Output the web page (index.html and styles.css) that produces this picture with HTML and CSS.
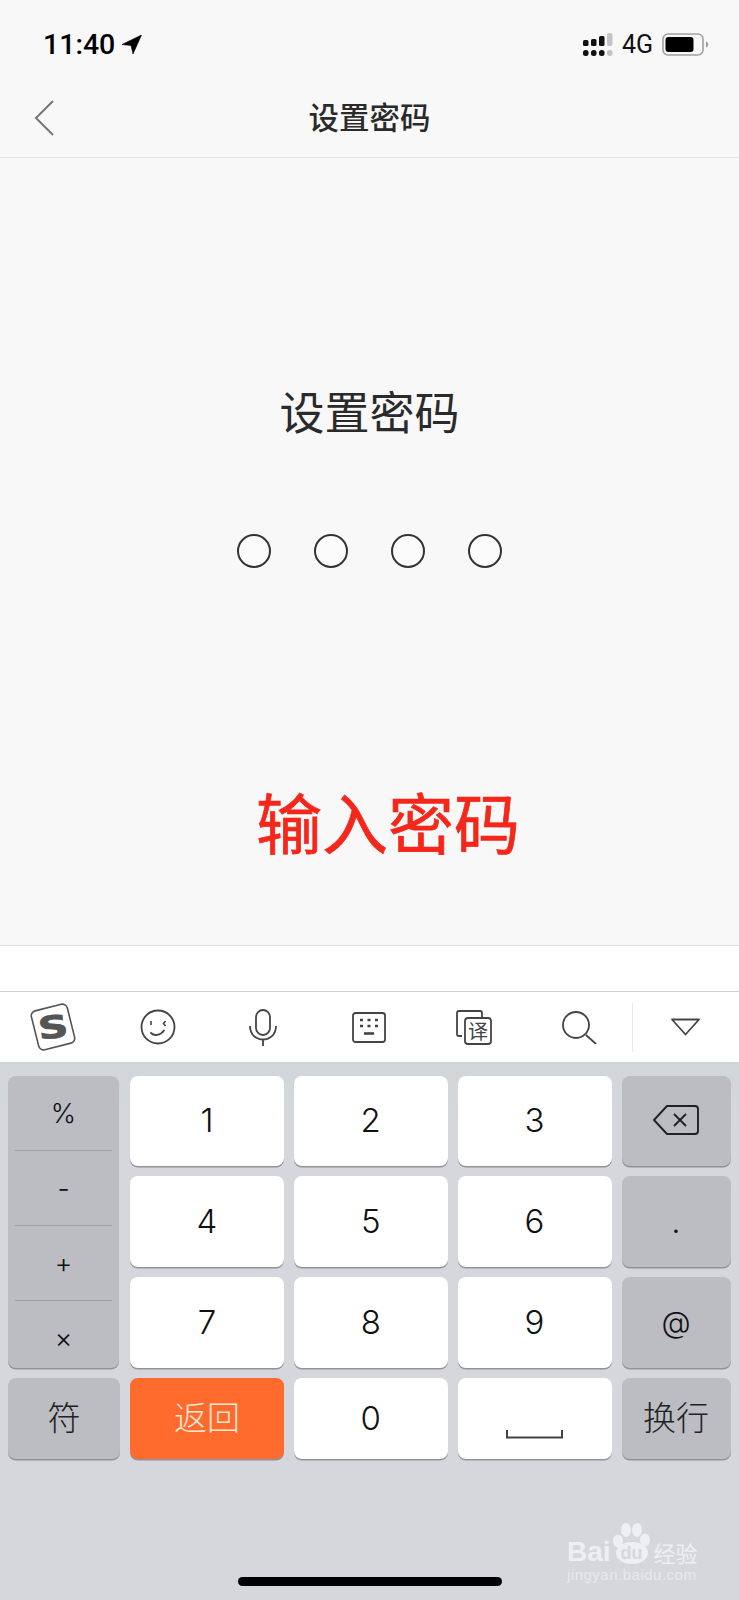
FILE: index.html
```html
<!DOCTYPE html>
<html lang="zh-CN">
<head>
    <meta charset="UTF-8">
    <meta name="viewport" content="width=device-width, initial-scale=1.0">
    <title>设置密码</title>
    <link rel="stylesheet" href="styles.css">
</head>
<body>
    <div class="phone">
        <div class="status">
            <div class="status-left">
                <span class="time">11:40</span>
                <svg class="loc" width="20" height="19" viewBox="0 0 20 19"><path d="M19.5 0 L0 9.5 L9 10.5 L11 19 Z" fill="#000" stroke="#000" stroke-width="0.6" stroke-linejoin="round"/></svg>
            </div>
            <div class="status-right">
                <svg width="30" height="23" viewBox="0 0 30 23">
                    <rect x="0" y="7" width="5.5" height="6" rx="1.5" fill="#111"/>
                    <rect x="8" y="6" width="5.5" height="7" rx="1.5" fill="#111"/>
                    <rect x="16" y="3" width="5.5" height="10" rx="1.5" fill="#111"/>
                    <rect x="24" y="0" width="5.5" height="13" rx="2" fill="#c4c4c4"/>
                    <rect x="0" y="17" width="5.5" height="6" rx="2.5" fill="#111"/>
                    <rect x="8" y="17" width="5.5" height="6" rx="2.5" fill="#111"/>
                    <rect x="16" y="17" width="5.5" height="6" rx="2.5" fill="#111"/>
                    <rect x="24" y="17" width="5.5" height="6" rx="2.5" fill="#c4c4c4"/>
                </svg>
                <span class="net">4G</span>
                <svg width="48" height="23" viewBox="0 0 48 23">
                    <rect x="1" y="1" width="40" height="21" rx="5" fill="none" stroke="#a0a0a0" stroke-width="1.6"/>
                    <rect x="3.5" y="4" width="28" height="15" rx="3" fill="#000"/>
                    <path d="M44 8.5 C47 9.5 47 13.5 44 14.5 Z" fill="#a0a0a0"/>
                </svg>
            </div>
        </div>

        <div class="nav">
            <svg class="back" width="20" height="36" viewBox="0 0 20 36"><path d="M19 1 L2 18 L19 35" fill="none" stroke="#777" stroke-width="2"/></svg>
            <div class="nav-title">设置密码</div>
        </div>

        <div class="setup">
            <div class="setup-title">设置密码</div>
            <div class="dots">
                <span class="dot"></span>
                <span class="dot"></span>
                <span class="dot"></span>
                <span class="dot"></span>
            </div>
            <div class="note">输入密码</div>
        </div>

        <div class="input-row"></div>

        <div class="toolbar">
            <div class="tool">
                <svg width="52" height="52" viewBox="0 0 52 52">
                    <rect x="7.5" y="6" width="37" height="40" rx="5" transform="rotate(-14 26 26)" fill="#fff" stroke="#555" stroke-width="1.6"/>
                    <text class="logo-s" transform="rotate(-6 26 26) translate(26 37) scale(1.35 1)" text-anchor="middle">S</text>
                </svg>
            </div>
            <div class="tool">
                <svg width="36" height="36" viewBox="0 0 36 36" fill="none" stroke="#444" stroke-width="1.8">
                    <circle cx="18" cy="18" r="16.5"/>
                    <path d="M11 12 V16 M25.5 12 L23.5 14.5 L25.5 17" stroke-width="1.6"/>
                    <path d="M11 24 C14 27 20 27 24 21.5" stroke-linecap="round"/>
                </svg>
            </div>
            <div class="tool">
                <svg width="28" height="37" viewBox="0 0 28 37" fill="none" stroke="#444" stroke-width="1.8">
                    <rect x="7" y="1" width="14" height="25" rx="7"/>
                    <path d="M1 17 C1 35 27 35 27 17 M14 30 V37"/>
                </svg>
            </div>
            <div class="tool">
                <svg width="34" height="31" viewBox="0 0 34 31">
                    <rect x="1" y="1" width="32" height="29" rx="2.5" fill="none" stroke="#444" stroke-width="1.8"/>
                    <path d="M8 8 H11 M15.5 8 H18.5 M23 8 H26 M8 14 H11 M15.5 14 H18.5 M23 14 H26" stroke="#444" stroke-width="2.6"/>
                    <path d="M12 21.5 H22" stroke="#444" stroke-width="2.6"/>
                </svg>
            </div>
            <div class="tool">
                <svg width="36" height="35" viewBox="0 0 36 35">
                    <path d="M6 26 H3 Q1 26 1 24 V3 Q1 1 3 1 H24 Q26 1 26 3 V7" fill="none" stroke="#444" stroke-width="1.8"/>
                    <rect x="9" y="8" width="26" height="26" rx="3" fill="#fff" stroke="#444" stroke-width="1.8"/>
                    <text class="logo-yi" x="22" y="28.5" text-anchor="middle">译</text>
                </svg>
            </div>
            <div class="tool">
                <svg width="35" height="33" viewBox="0 0 35 33" fill="none" stroke="#444" stroke-width="1.8">
                    <circle cx="14" cy="14" r="13"/>
                    <path d="M24 24 L34 33"/>
                </svg>
            </div>
            <div class="tool tool-last">
                <svg width="31" height="18" viewBox="0 0 31 18"><path d="M2 1.5 H29 L15.5 16.5 Z" fill="none" stroke="#444" stroke-width="1.8" stroke-linejoin="round"/></svg>
            </div>
        </div>

        <div class="keyboard">
            <div class="keys">
                <div class="key-side">
                    <div class="side-item">%</div>
                    <div class="side-item">-</div>
                    <div class="side-item">+</div>
                    <div class="side-item">×</div>
                </div>
                <div class="key">1</div>
                <div class="key">2</div>
                <div class="key">3</div>
                <div class="key key-fn">
                    <svg width="46" height="30" viewBox="0 0 46 30" fill="none" stroke="#222" stroke-width="1.9">
                        <path d="M14 1 H42 Q45 1 45 4 V26 Q45 29 42 29 H14 L1 15 Z" stroke-linejoin="round"/>
                        <path d="M21 9 L33 21 M33 9 L21 21"/>
                    </svg>
                </div>
                <div class="key">4</div>
                <div class="key">5</div>
                <div class="key">6</div>
                <div class="key key-fn key-dot">.</div>
                <div class="key">7</div>
                <div class="key">8</div>
                <div class="key">9</div>
                <div class="key key-fn key-at">@</div>
                <div class="key key-fn key-cjk">符</div>
                <div class="key key-orange key-cjk">返回</div>
                <div class="key">0</div>
                <div class="key key-space">
                    <svg width="57" height="9" viewBox="0 0 57 9"><path d="M1 0 V7.5 H56 V0" fill="none" stroke="#444" stroke-width="2"/></svg>
                </div>
                <div class="key key-fn key-cjk">换行</div>
            </div>
            <div class="home-bar"></div>
            <div class="watermark">
                <div class="wm-top">
                    <span class="wm-bai">Bai</span>
                    <span class="wm-du">du
                        <svg class="wm-paw" width="38" height="26" viewBox="0 0 38 26" fill="#eeeff2">
                            <ellipse cx="5" cy="19" rx="5" ry="6.5"/>
                            <ellipse cx="13" cy="8" rx="5" ry="7"/>
                            <ellipse cx="24" cy="8" rx="5" ry="7"/>
                            <ellipse cx="32" cy="18" rx="5" ry="6.5"/>
                        </svg>
                    </span>
                    <span class="wm-jy">经验</span>
                </div>
                <div class="wm-url">jingyan.baidu.com</div>
            </div>
        </div>
    </div>
</body>
</html>
```

FILE: styles.css
```css
html, body {
    margin: 0;
    padding: 0;
}
body {
    width: 739px;
    height: 1600px;
    overflow: hidden;
    font-family: Inter, "Noto Sans CJK SC", sans-serif;
    background-color: #f8f8f8;
    color: #222;
}
.phone {
    height: 1600px;
    display: flex;
    flex-direction: column;
}

/* status bar */
.status {
    height: 86px;
    flex: none;
    display: flex;
    justify-content: space-between;
    align-items: center;
    padding: 2px 29px 0 43px;
    box-sizing: border-box;
}
.status-left {
    display: flex;
    align-items: center;
    gap: 7px;
}
.time {
    font-family: Roboto, sans-serif;
    font-size: 28.5px;
    font-weight: 500;
    color: #000;
}
.status-right {
    display: flex;
    align-items: center;
    gap: 9px;
}
.net {
    font-family: Roboto, sans-serif;
    font-size: 25px;
    color: #111;
}

/* nav */
.nav {
    height: 72px;
    flex: none;
    box-sizing: border-box;
    border-bottom: 1px solid #e3e3e3;
    display: flex;
    align-items: center;
    justify-content: center;
    position: relative;
}
.back {
    position: absolute;
    left: 34px;
    top: 14px;
}
.nav-title {
    font-family: "Noto Sans CJK SC", sans-serif;
    font-size: 30.5px;
    font-weight: 500;
    color: #2a2a2a;
    padding-bottom: 12px;
}

/* password area */
.setup {
    height: 787px;
    flex: none;
    display: flex;
    flex-direction: column;
    align-items: center;
    padding-top: 226px;
    box-sizing: border-box;
    position: relative;
}
.setup-title {
    font-family: "Noto Sans CJK SC", sans-serif;
    font-size: 45px;
    line-height: 54px;
    color: #2a2a2a;
}
.dots {
    display: flex;
    gap: 43px;
    margin-top: 96px;
}
.dot {
    width: 34px;
    height: 34px;
    box-sizing: border-box;
    border: 2px solid #333;
    border-radius: 50%;
    background: #fbfbfb;
}
.note {
    position: absolute;
    left: 256px;
    top: 622px;
    font-family: "Noto Sans CJK SC", sans-serif;
    font-size: 66px;
    line-height: 80px;
    color: #f5261a;
    -webkit-text-stroke: 0.7px #f5261a;
}

.input-row {
    height: 47px;
    flex: none;
    box-sizing: border-box;
    background: white;
    border-top: 1px solid #e2e2e2;
    border-bottom: 1px solid #cfcfcf;
}

/* toolbar */
.toolbar {
    height: 70px;
    flex: none;
    background: white;
    display: grid;
    grid-template-columns: repeat(6, 105.33px) 1fr;
    align-items: center;
}
.tool {
    display: flex;
    justify-content: center;
    align-items: center;
    position: relative;
}
.tool-last {
    height: 49px;
    border-left: 1px solid #e8e8e8;
}
.logo-s {
    font-family: "DejaVu Sans", sans-serif;
    font-size: 31px;
    font-weight: bold;
    fill: #555;
    stroke: #555;
    stroke-width: 0.8px;
}
.logo-yi {
    font-family: "Noto Sans CJK SC", sans-serif;
    font-size: 20px;
    fill: #444;
}

/* keyboard */
.keyboard {
    flex: 1;
    position: relative;
    background: linear-gradient(#d1d6d9, #d5d7dc 60px);
    padding: 14px 8px 0;
}
.keys {
    display: grid;
    grid-template-columns: 112px 154px 153.5px 154px 109px;
    grid-template-rows: 90px 91px 91px 81px;
    gap: 10px;
}
.key {
    background: white;
    border-radius: 8px;
    box-shadow: 0 1.5px 0 #8f9499;
    display: flex;
    align-items: center;
    justify-content: center;
    font-size: 33px;
    font-weight: 300;
    color: #111;
    padding-bottom: 2px;
    box-sizing: border-box;
}
.key-fn, .key-side {
    background: #bbbdc2;
}
.key-side {
    grid-row: span 3;
    margin-right: 1px;
    border-radius: 8px;
    box-shadow: 0 1.5px 0 #8f9499;
    display: flex;
    flex-direction: column;
    padding: 0 7px;
}
.side-item {
    height: 75px;
    flex: none;
    box-sizing: border-box;
    border-bottom: 1px solid #9ea0a5;
    display: flex;
    align-items: center;
    justify-content: center;
    font-size: 27px;
    font-weight: 300;
    color: #111;
}
.side-item:last-child {
    border-bottom: none;
}
.key-at {
    font-size: 30px;
}
.key-cjk {
    font-family: "Noto Sans CJK SC", sans-serif;
    color: #222;
    padding-bottom: 5px;
}
.key-orange {
    background: #ff6a2d;
    color: #ffe7d8;
}
.key-space {
    align-items: flex-end;
    padding-bottom: 20px;
}

.home-bar {
    width: 264px;
    height: 9px;
    margin: 118px auto 0;
    border-radius: 5px;
    background: #000;
}

/* baidu watermark */
.watermark {
    position: absolute;
    left: 567px;
    top: 478px;
    color: #eeeff2;
}
.wm-top {
    display: flex;
    align-items: flex-end;
    height: 24px;
}
.wm-bai {
    font-family: "Liberation Sans", sans-serif;
    font-size: 28px;
    font-weight: bold;
    line-height: 24px;
}
.wm-du {
    position: relative;
    width: 32px;
    height: 22px;
    margin-left: 5px;
    border-radius: 50%;
    background: #eeeff2;
    color: #d5d7dc;
    font-family: "Liberation Sans", sans-serif;
    font-size: 18px;
    font-weight: bold;
    line-height: 22px;
    text-align: center;
}
.wm-paw {
    position: absolute;
    left: -3px;
    top: -20px;
}
.wm-jy {
    font-family: "Noto Sans CJK SC", sans-serif;
    font-size: 22px;
    line-height: 24px;
    margin-left: 6px;
}
.wm-url {
    font-family: "Liberation Sans", sans-serif;
    font-size: 15px;
    letter-spacing: 0.5px;
    margin-top: 2px;
    color: #e8e9ec;
}
```
